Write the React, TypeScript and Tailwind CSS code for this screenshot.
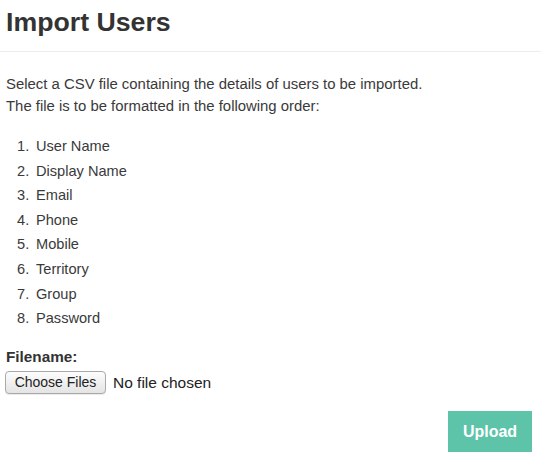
import React from "react";

// Columns the CSV must have, in order
const fields = [
  "User Name",
  "Display Name",
  "Email",
  "Phone",
  "Mobile",
  "Territory",
  "Group",
  "Password",
];

export default function App() {
  return (
    <div className="w-[545px] h-[466px] bg-white text-[#333] font-['Liberation_Sans',Arial,sans-serif] overflow-hidden">
      {/* Header */}
      <div className="w-[541px] pl-[6px] pt-[7px] pb-[14px] border-b border-[#ececec]">
        <h1 className="text-[26.7px] leading-[30px] font-bold text-[#333]">Import Users</h1>
      </div>

      <div className="px-[6px]">
        {/* Intro */}
        <p className="mt-[21px] text-[14.9px] leading-[22px] text-[#3a3a3a]">
          Select a CSV file containing the details of users to be imported.
          <br />
          The file is to be formatted in the following order:
        </p>

        {/* Field order */}
        <ol className="mt-[17px] pl-[11px] text-[14.6px] leading-[24.6px] text-[#3a3a3a]">
          {fields.map((f, i) => (
            <li key={f} className="flex">
              <span className="w-[19px]">{i + 1}.</span>
              <span>{f}</span>
            </li>
          ))}
        </ol>

        {/* File picker */}
        <div className="mt-[16px] text-[15.3px] leading-[20px] font-bold text-[#333]">Filename:</div>
        <div className="mt-[4px] flex items-center gap-[7px]">
          <button className="h-[23px] w-[101px] -ml-px rounded-[4px] border border-[#a9a9a9] bg-gradient-to-b from-[#fdfdfd] to-[#e4e4e4] text-[14px] leading-none text-[#222] shadow-[0_1px_0_rgba(0,0,0,0.08)]">
            Choose Files
          </button>
          <span className="text-[15.5px] text-[#222]">No file chosen</span>
        </div>

        {/* Submit */}
        <div className="mt-[17px] flex justify-end pr-[7px]">
          <button className="w-[84px] h-[41px] bg-[#5dc3a9] text-white text-[16px] font-bold">Upload</button>
        </div>
      </div>
    </div>
  );
}
